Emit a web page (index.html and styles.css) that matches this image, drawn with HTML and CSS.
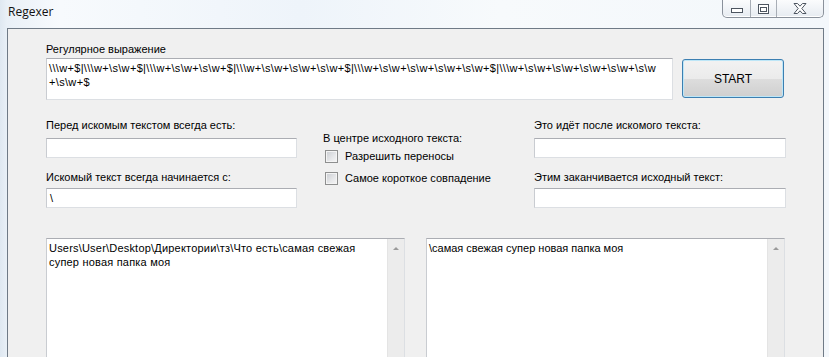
FILE: index.html
```html
<!DOCTYPE html>
<html>
	<head>
		<meta charset="UTF-8">
		<title>Regexer</title>
		<link rel="stylesheet" href="styles.css">
	</head>
	<body>
	    <div class="window">
	        <div class="titlebar">
	            <span class="title">Regexer</span>
	            <div class="caption">
	                <span class="cap cap-min">
	                    <svg width="12" height="5" viewBox="0 0 12 5"><rect x="0.5" y="0.5" width="11" height="4" fill="#fff" stroke="#4d5560"/></svg>
	                </span>
	                <span class="cap cap-max">
	                    <svg width="11" height="10" viewBox="0 0 11 10"><rect x="0.5" y="0.5" width="10" height="9" fill="#fff" stroke="#4d5560"/><rect x="2.5" y="3.5" width="6" height="4" fill="none" stroke="#4d5560"/></svg>
	                </span>
	                <span class="cap cap-close">
	                    <svg width="14" height="11" viewBox="0 0 14 11"><path d="M1 0.5 H4.5 L7 3.2 L9.5 0.5 H13 L8.8 5.5 L13 10.5 H9.5 L7 7.8 L4.5 10.5 H1 L5.2 5.5 Z" fill="#fff" stroke="#4d5560" stroke-linejoin="round"/></svg>
	                </span>
	            </div>
	        </div>

	        <div class="client">
	            <div class="row-regex">
	                <div class="field">
	                    <div class="lbl">Регулярное выражение</div>
	                    <div class="box box-regex">\\\w+$|\\\w+\s\w+$|\\\w+\s\w+\s\w+$|\\\w+\s\w+\s\w+\s\w+$|\\\w+\s\w+\s\w+\s\w+\s\w+$|\\\w+\s\w+\s\w+\s\w+\s\w+\s\w<br>+\s\w+$</div>
	                </div>
	                <div class="start-btn">START</div>
	            </div>

	            <div class="row-opts">
	                <div class="col col-left">
	                    <div class="lbl">Перед искомым текстом всегда есть:</div>
	                    <div class="box box-line"></div>
	                    <div class="lbl lbl-second">Искомый текст всегда начинается с:</div>
	                    <div class="box box-line">\</div>
	                </div>
	                <div class="col col-mid">
	                    <div class="lbl">В центре исходного текста:</div>
	                    <div class="check"><span class="check-box"></span>Разрешить переносы</div>
	                    <div class="check"><span class="check-box"></span>Самое короткое совпадение</div>
	                </div>
	                <div class="col col-right">
	                    <div class="lbl">Это идёт после искомого текста:</div>
	                    <div class="box box-line"></div>
	                    <div class="lbl lbl-second">Этим заканчивается исходный текст:</div>
	                    <div class="box box-line"></div>
	                </div>
	            </div>

	            <div class="row-out">
	                <div class="memo">
	                    <div class="memo-text memo-path">Users\User\Desktop\Директории\тз\Что есть\самая свежая<br>супер новая папка моя</div>
	                    <div class="scroll"><span class="arrow"></span></div>
	                </div>
	                <div class="memo">
	                    <div class="memo-text">\самая свежая супер новая папка моя</div>
	                    <div class="scroll"><span class="arrow"></span></div>
	                </div>
	            </div>
	        </div>
	    </div>
	</body>
</html>
```

FILE: styles.css
```css
body{
    margin: 0;
    padding: 0;
    overflow: hidden;
    font-family: "Liberation Sans", Arial, sans-serif;
    font-size: 11px;
    color: #000;
}
.window{
    height: 357px;
    overflow: hidden;
    display: flex;
    flex-direction: column;
    background: linear-gradient(90deg, #dfe8f1 0px, #e9f0f7 7px, #f7fafd 60px, #eef4fa 300px, #f7fafc 500px, #f3f7fb 829px);
}
.titlebar{
    height: 28px;
    flex: none;
    display: flex;
    justify-content: space-between;
    align-items: flex-start;
}
.title{
    font-family: "Open Sans", "Noto Sans", sans-serif;
    font-size: 12px;
    line-height: 16px;
    padding: 4px 0 0 8px;
    color: #111;
}
.caption{
    display: flex;
    height: 17px;
    margin-right: 5px;
    border: 1px solid #8a919b;
    border-top: none;
    border-radius: 0 0 5px 5px;
    background: linear-gradient(#fbfcfd, #e6ebf1);
    box-shadow: inset 0 -1px 0 #ffffff;
}
.cap{
    display: flex;
    align-items: center;
    justify-content: center;
}
.cap-min{
    width: 27px;
    border-right: 1px solid #a8aeb6;
    padding-top: 4px;
}
.cap-max{
    width: 25px;
    border-right: 1px solid #a8aeb6;
}
.cap-close{
    width: 46px;
}

/* ===== client area ===== */
.client{
    flex: 1;
    margin: 0 5px 0 7px;
    border: 1px solid #6f7a86;
    border-bottom: none;
    background: #f0f0f0;
    padding: 14px 0 0 38px;
}
.lbl{
    line-height: 13px;
    white-space: nowrap;
}
.box{
    background: #fff;
    border: 1px solid #dcdfe3;
    border-top-color: #abadb3;
    border-left-color: #c9ccd1;
    box-sizing: border-box;
    white-space: nowrap;
    overflow: hidden;
}
.row-regex{
    display: grid;
    grid-template-columns: 627px 102px;
    column-gap: 9px;
    align-items: end;
}
.row-regex .lbl{
    margin-bottom: 2px;
}
.box-regex{
    height: 42px;
    padding: 2px 0 0 2px;
    line-height: 14px;
    letter-spacing: 0.33px;
}
.start-btn{
    height: 39px;
    margin-bottom: 2px;
    box-sizing: border-box;
    border: 1px solid #3c7fb1;
    border-radius: 3px;
    background: linear-gradient(#f2f2f2 0%, #ebebeb 50%, #dddddd 51%, #cfcfcf 100%);
    box-shadow: inset 0 0 0 1px #bde6f7;
    display: flex;
    align-items: center;
    justify-content: center;
    font-size: 12px;
}

.row-opts{
    display: grid;
    grid-template-columns: 277px 211px 252px;
    margin-top: 19px;
}
.col-left .box-line{
    width: 251px;
}
.box-line{
    height: 20px;
    margin-top: 6px;
    padding: 2px 0 0 3px;
    line-height: 14px;
}
.lbl-second{
    margin-top: 13px;
}
.lbl-second + .box-line{
    margin-top: 4px;
}
.col-mid{
    padding-top: 13px;
}
.check{
    display: flex;
    align-items: center;
    margin-top: 2px;
    height: 18px;
    white-space: nowrap;
}
.check + .check{
    margin-top: 4px;
}
.check-box{
    width: 13px;
    height: 13px;
    box-sizing: border-box;
    margin: 0 7px 0 2px;
    border: 1px solid #8e8f8f;
    background: linear-gradient(135deg, #c9ccd1 0%, #e7e8ea 60%, #f6f6f6 100%);
    box-shadow: inset 0 0 0 1px #f4f4f4;
}

.row-out{
    display: grid;
    grid-template-columns: 359px 359px;
    column-gap: 21px;
    margin-top: 30px;
}
.memo{
    height: 140px;
    display: flex;
    background: #fff;
    border: 1px solid #dcdfe3;
    border-top-color: #abadb3;
    border-left-color: #c9ccd1;
}
.memo-text{
    flex: 1;
    padding: 2px 0 0 2px;
    line-height: 14px;
    white-space: nowrap;
    overflow: hidden;
}
.memo-path{
    letter-spacing: 0.2px;
}
.scroll{
    width: 17px;
    flex: none;
    background: #ececec;
    border-left: 1px solid #e4e4e4;
    display: flex;
    justify-content: center;
    padding-top: 8px;
    box-sizing: border-box;
}
.arrow{
    width: 0;
    height: 0;
    border-left: 3px solid transparent;
    border-right: 3px solid transparent;
    border-bottom: 3px solid #9a9a9a;
}
```
